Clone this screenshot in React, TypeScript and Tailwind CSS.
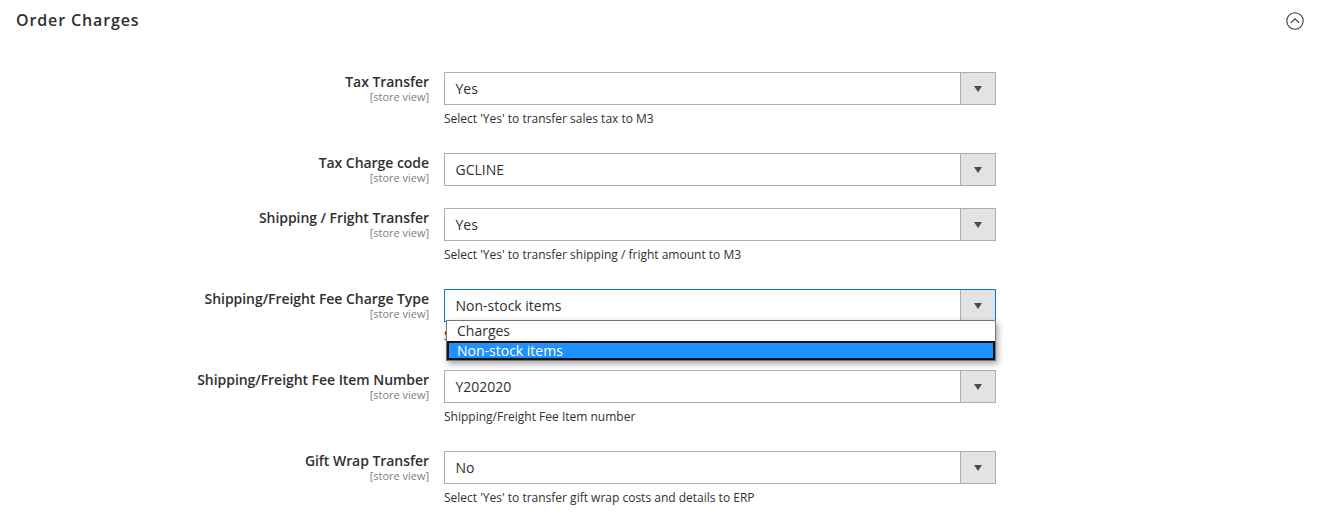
import React from 'react';

const rows = [
	{ label: 'Tax Transfer', value: 'Yes', note: "Select 'Yes' to transfer sales tax to M3" },
	{ label: 'Tax Charge code', value: 'GCLINE' },
	{ label: 'Shipping / Fright Transfer', value: 'Yes', note: "Select 'Yes' to transfer shipping / fright amount to M3" },
	{ label: 'Shipping/Freight Fee Charge Type', value: 'Non-stock items', note: 'Shipping/Freight Fee Charge Type', open: true },
	{ label: 'Shipping/Freight Fee Item Number', value: 'Y202020', note: 'Shipping/Freight Fee Item number' },
	{ label: 'Gift Wrap Transfer', value: 'No', note: "Select 'Yes' to transfer gift wrap costs and details to ERP" },
];

function Row({ label, value, note, open }: { label: string; value: string; note?: string; open?: boolean }) {
	return (
		<div className={note ? 'flex h-[81px]' : 'flex h-[55px]'}>
			<div className="w-[430px] shrink-0 pr-px text-right">
				<div className="text-[14px] leading-[19px] font-semibold tracking-[-0.05px] text-[#303030]">{label}</div>
				<div className="text-[11px] leading-[12px] tracking-[-0.02px] text-[#808080]">[store view]</div>
			</div>
			<div className="relative ml-[14px] w-[552px] shrink-0">
				<div className={open ? 'flex h-[33px] border border-[#007bdb] bg-white' : 'flex h-[33px] border border-[#adadad] bg-white'}>
					<div className="flex-1 pl-[10.5px] text-[14px] leading-[31px] text-[#303030]">{value}</div>
					<div className="flex w-[35px] items-center justify-center border-l border-[#adadad] bg-[#e3e3e3]">
						<div className="h-0 w-0 border-x-[4.5px] border-t-[6px] border-x-transparent border-t-[#514943]" />
					</div>
				</div>
				{note && <div className="mt-[5px] text-[12px] leading-[17px] text-[#303030]">{note}</div>}
				{open && (
					<div className="absolute top-[31px] left-[2px] w-[550px] border border-[#767676] bg-white text-[14px] leading-[19px] shadow-[2px_3px_6px_rgba(0,0,0,0.35)]">
						<div className="h-[20px] pl-[10px] text-[#303030]">Charges</div>
						<div className="h-[19px] border-2 border-[#111111] bg-[#1e90ff] pl-[8px] leading-[15px] text-white">Non-stock items</div>
					</div>
				)}
			</div>
		</div>
	);
}

export default function App() {
	return (
		<div className="h-[523px] overflow-hidden bg-white font-['Open_Sans',sans-serif]">
			<div className="flex h-[72px] items-start justify-between pr-[15px] pl-[16px]">
				<h1 className="pt-[9px] text-[16px] leading-[22px] font-semibold tracking-[0.87px] text-[#303030]">Order Charges</h1>
				<svg className="mt-[12px]" width="18" height="18" viewBox="0 0 18 18" fill="none" stroke="#41362f">
					<circle cx="9" cy="9" r="8.2" strokeWidth="1.1" />
					<path d="M4.8 10.8 9 6.8l4.2 4" strokeWidth="1.1" />
				</svg>
			</div>
			{rows.map((row) => (
				<Row key={row.label} {...row} />
			))}
		</div>
	);
}
